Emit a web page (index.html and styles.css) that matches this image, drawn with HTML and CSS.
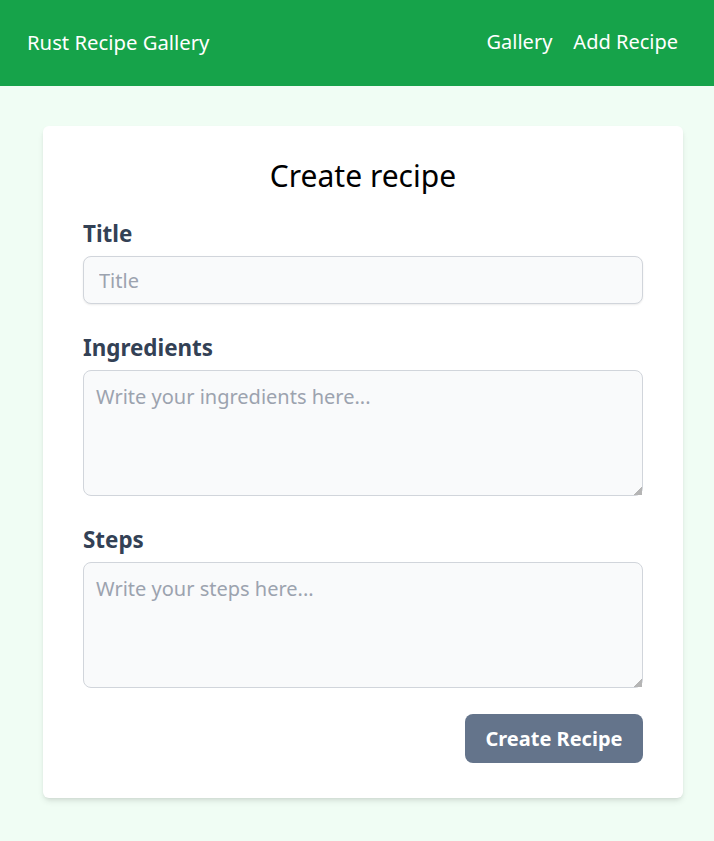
FILE: index.html
```html
<!DOCTYPE html>
<html lang="en">
<head>
<meta charset="utf-8">
<title>Rust Recipe Gallery</title>
<link rel="stylesheet" href="styles.css">
</head>
<body>
<header class="topbar">
  <a class="brand" href="#">Rust Recipe Gallery</a>
  <nav class="nav">
    <a href="#">Gallery</a>
    <a href="#">Add Recipe</a>
  </nav>
</header>
<main class="page">
  <section class="card">
    <h1 class="card-title">Create recipe</h1>
    <form class="form">
      <div class="field">
        <label class="label" for="title">Title</label>
        <input class="input" id="title" type="text" placeholder="Title">
      </div>
      <div class="field">
        <label class="label" for="ingredients">Ingredients</label>
        <textarea class="textarea" id="ingredients" placeholder="Write your ingredients here..."></textarea>
      </div>
      <div class="field">
        <label class="label" for="steps">Steps</label>
        <textarea class="textarea" id="steps" placeholder="Write your steps here..."></textarea>
      </div>
      <div class="actions">
        <button class="button" type="button">Create Recipe</button>
      </div>
    </form>
  </section>
</main>
</body>
</html>
```
FILE: styles.css
```css
* { box-sizing: border-box; }
html, body { margin: 0; padding: 0; }
body {
  font-family: "Noto Sans", "Open Sans", sans-serif;
  background: #f0fdf4;
  min-height: 841px;
}
.topbar {
  height: 86px;
  background: #16a34a;
  display: flex;
  align-items: flex-start;
  justify-content: space-between;
  padding: 28px 36px 0 27px;
}
.brand, .nav a {
  color: #ffffff;
  text-decoration: none;
  font-size: 20px;
  line-height: 28px;
}
.brand { font-size: 20.3px; }
.nav { display: flex; gap: 21px; }
.page { padding: 40px 0 43px 43px; }
.card {
  width: 640px;
  background: #ffffff;
  border-radius: 6px;
  box-shadow: 0 4px 6px -1px rgba(0,0,0,0.1), 0 2px 4px -2px rgba(0,0,0,0.1);
  padding: 32px 40px 35px;
}
.card-title {
  margin: 0 0 26px;
  text-align: center;
  font-size: 30px;
  line-height: 36px;
  font-weight: 400;
  color: #000000;
}
.form { display: flex; flex-direction: column; gap: 30px; }
.field { display: flex; flex-direction: column; }
.label {
  font-size: 22.4px;
  line-height: 28px;
  font-weight: 700;
  color: #334155;
  margin-bottom: 8px;
}
.input, .textarea {
  font-family: "Noto Sans", "Open Sans", sans-serif;
  font-size: 20px;
  color: #111827;
  background: #f9fafb;
  border: 1px solid #d1d5db;
  border-radius: 8px;
  width: 100%;
}
.input {
  height: 48px;
  padding: 0 15px;
  box-shadow: 0 1px 2px rgba(0,0,0,0.08);
}
.textarea {
  height: 126px;
  padding: 12px;
  line-height: 28px;
  resize: vertical;
  display: block;
}
.textarea::-webkit-resizer {
  background: linear-gradient(135deg, transparent 72%, #b5b5b5 72%);
}
.input::placeholder, .textarea::placeholder { color: #9ca3af; }
.actions { display: flex; justify-content: flex-end; margin-top: -4px; }
.button {
  font-family: "Noto Sans", "Open Sans", sans-serif;
  font-size: 20px;
  font-weight: 700;
  color: #ffffff;
  background: #64748b;
  border: none;
  border-radius: 8px;
  height: 49px;
  padding: 0 20.5px;
}
```
